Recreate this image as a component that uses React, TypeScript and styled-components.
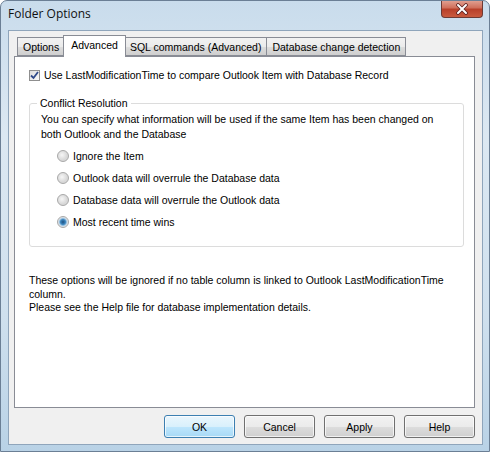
import React from 'react';
import styled, { createGlobalStyle } from 'styled-components';

const GlobalStyle = createGlobalStyle`
  html, body {
    margin: 0;
    padding: 0;
    background: #ffffff;
  }
  body {
    font-family: "Liberation Sans", Arial, sans-serif;
    font-size: 10.5px;
    color: #000;
  }
`

const tabs = ['Options', 'Advanced', 'SQL commands (Advanced)', 'Database change detection'];
const options = [
    'Ignore the Item',
    'Outlook data will overrule the Database data',
    'Database data will overrule the Outlook data',
    'Most recent time wins',
];
const buttons = ['OK', 'Cancel', 'Apply', 'Help'];

export default function App() {
    return (
        <>
            <GlobalStyle/>
            <Window>
                <TitleBar>
                    <Title>Folder Options</Title>
                    <CloseButton>
                        <svg width="14" height="12" viewBox="0 0 14 12">
                            <path d="M3 2 L11 10 M11 2 L3 10" stroke="#5a2020" strokeWidth="3.6" strokeLinecap="round"/>
                            <path d="M3 2 L11 10 M11 2 L3 10" stroke="#ffffff" strokeWidth="2" strokeLinecap="round"/>
                        </svg>
                    </CloseButton>
                </TitleBar>
                <Client>
                    <TabStrip>
                        {tabs.map((t, i) => (
                            <Tab key={t} active={i === 1}>{t}</Tab>
                        ))}
                    </TabStrip>
                    <Panel>
                        <CheckRow>
                            <CheckBox>
                                <svg width="9" height="9" viewBox="0 0 9 9">
                                    <path d="M1 4.5 L3.5 7 L8 1" stroke="#2f4a8a" strokeWidth="1.8" fill="none"/>
                                </svg>
                            </CheckBox>
                            Use LastModificationTime to compare Outlook Item with Database Record
                        </CheckRow>
                        <GroupBox>
                            <Legend>Conflict Resolution</Legend>
                            <Description>
                                You can specify what information will be used if the same Item has been changed on
                                <br/>both Outlook and the Database
                            </Description>
                            <RadioList>
                                {options.map((o, i) => (
                                    <RadioRow key={o}>
                                        <Radio checked={i === 3}/>
                                        {o}
                                    </RadioRow>
                                ))}
                            </RadioList>
                        </GroupBox>
                        <Note>
                            These options will be ignored if no table column is linked to Outlook LastModificationTime
                            <br/>column.
                            <br/>Please see the Help file for database implementation details.
                        </Note>
                    </Panel>
                    <ButtonRow>
                        {buttons.map((b, i) => (
                            <Button key={b} primary={i === 0}>{b}</Button>
                        ))}
                    </ButtonRow>
                </Client>
            </Window>
        </>
    );
}

const Window = styled.div`
  width: 490px;
  height: 452px;
  box-sizing: border-box;
  display: flex;
  flex-direction: column;
  border: 1px solid #6b7f95;
  border-radius: 7px 7px 0 0;
  background: linear-gradient(180deg, #c9dcec 0%, #dce8f2 30%, #cfe0ee 70%, #b9d2e6 100%);
  overflow: hidden;
`
const TitleBar = styled.div`
  height: 29px;
  display: flex;
  align-items: flex-start;
  justify-content: space-between;
  padding: 0 6px 0 7px;
`
const Title = styled.div`
  font-family: "Open Sans", "Noto Sans", sans-serif;
  font-size: 12px;
  color: #111;
  margin-top: 4px;
`
const CloseButton = styled.div`
  width: 40px;
  height: 17px;
  margin-top: -1px;
  display: flex;
  align-items: center;
  justify-content: center;
  border: 1px solid #6d3a34;
  border-top: none;
  border-radius: 0 0 4px 4px;
  background: linear-gradient(180deg, #e3a597 0%, #d0705c 45%, #b8402a 55%, #c95a3e 100%);
`
const Client = styled.div`
  flex: 1;
  margin: 0 6px 6px 7px;
  border: 1px solid #8fa5bb;
  background: #f0f0f0;
  display: flex;
  flex-direction: column;
  padding: 3px 7px 0 5px;
`
const TabStrip = styled.div`
  display: flex;
  align-items: flex-end;
  padding-left: 3px;
  height: 22px;
  position: relative;
  z-index: 1;
`
const Tab = styled.div<{ active?: boolean }>`
  height: ${p => p.active ? '22px' : '19px'};
  box-sizing: border-box;
  padding: ${p => p.active ? '3px 7px 0' : '3px 5px 0'};
  margin: ${p => p.active ? '0 -1px -1px -2px' : '0'};
  border: 1px solid #898c95;
  border-bottom: ${p => p.active ? 'none' : '1px solid #898c95'};
  border-left: ${p => p.active ? '1px solid #898c95' : 'none'};
  background: ${p => p.active ? '#ffffff' : 'linear-gradient(180deg, #f2f2f2 0%, #ebebeb 50%, #dddddd 51%, #cfcfcf 100%)'};
  position: relative;
  z-index: ${p => p.active ? 2 : 1};
  white-space: nowrap;
  &:first-child {
    border-left: 1px solid #898c95;
  }
`
const Panel = styled.div`
  height: 352px;
  box-sizing: border-box;
  border: 1px solid #898c95;
  background: #ffffff;
  padding: 11px 10px 0 14px;
  display: flex;
  flex-direction: column;
`
const CheckRow = styled.div`
  display: flex;
  align-items: center;
  gap: 4px;
  height: 14px;
`
const CheckBox = styled.div`
  width: 11px;
  height: 11px;
  box-sizing: border-box;
  border: 1px solid #8f8f8f;
  background: linear-gradient(135deg, #dcdcdc, #fafafa);
  display: flex;
  align-items: center;
  justify-content: center;
`
const GroupBox = styled.fieldset`
  margin: 15px 0 0 0;
  padding: 2px 0 10px 11px;
  border: 1px solid #dcdcdc;
  border-radius: 3px;
  height: 150px;
  box-sizing: border-box;
`
const Legend = styled.legend`
  padding: 0 3px;
  margin-left: -4px;
`
const Description = styled.div`
  line-height: 15px;
  margin-top: 1px;
`
const RadioList = styled.div`
  display: flex;
  flex-direction: column;
  gap: 9px;
  margin: 7px 0 0 16px;
`
const RadioRow = styled.div`
  display: flex;
  align-items: center;
  gap: 4px;
  height: 13px;
`
const Radio = styled.span<{ checked?: boolean }>`
  width: 12px;
  height: 12px;
  box-sizing: border-box;
  border-radius: 50%;
  border: 1px solid #a8a8a8;
  background: ${p => p.checked
    ? 'radial-gradient(circle at 50% 50%, #1f4f7f 0, #3c87c0 2.5px, #bcd6ea 4px, #e8e8e8 5px)'
    : 'radial-gradient(circle at 40% 40%, #f6f6f6 0, #d8d8d8 5px)'};
`
const Note = styled.div`
  margin-top: 27px;
  line-height: 13.5px;
`
const ButtonRow = styled.div`
  display: flex;
  justify-content: flex-end;
  gap: 9px;
  padding-top: 7px;
`
const Button = styled.div<{ primary?: boolean }>`
  width: 71px;
  height: 23px;
  box-sizing: border-box;
  display: flex;
  align-items: center;
  justify-content: center;
  border: 1px solid ${p => p.primary ? '#3c7fb1' : '#707070'};
  border-radius: 3px;
  background: ${p => p.primary
    ? 'linear-gradient(180deg, #eaf6fd 0%, #d9f0fc 50%, #bee6fd 51%, #a7d9f5 100%)'
    : 'linear-gradient(180deg, #f2f2f2 0%, #ebebeb 50%, #dddddd 51%, #cfcfcf 100%)'};
  box-shadow: inset 0 0 0 1px rgba(255, 255, 255, 0.7);
`
